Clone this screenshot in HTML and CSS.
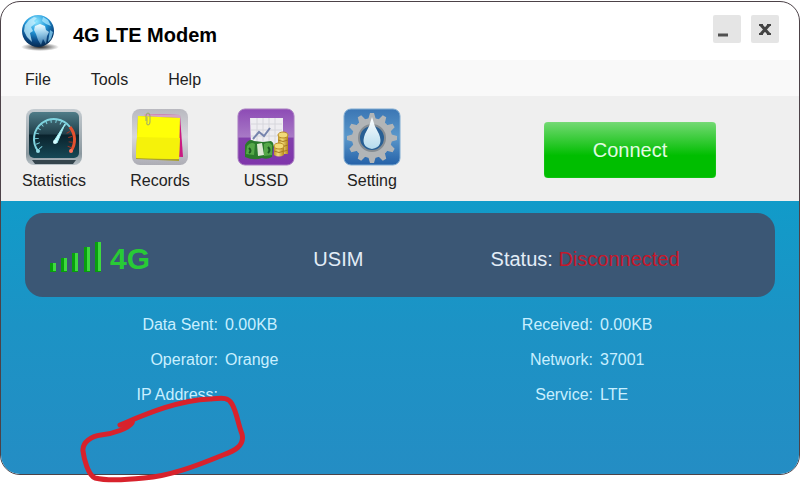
FILE: index.html
```html
<!DOCTYPE html>
<html lang="en">
<head>
  <meta charset="UTF-8" />
  <meta name="viewport" content="width=device-width, initial-scale=1.0"/>
  <title>4G LTE Modem</title>
  <link rel="stylesheet" href="styles.css">
</head>
<body>

  <div class="window">
    <header class="titlebar">
      <svg class="logo" viewBox="0 0 40 36" aria-hidden="true">
        <defs>
          <radialGradient id="globe" cx="45%" cy="20%" r="80%">
            <stop offset="0" stop-color="#8fe6ff"/>
            <stop offset="0.4" stop-color="#249bdc"/>
            <stop offset="0.75" stop-color="#0b4a86"/>
            <stop offset="1" stop-color="#062a50"/>
          </radialGradient>
          <radialGradient id="globe-shadow">
            <stop offset="0" stop-color="#222"/>
            <stop offset="1" stop-color="#222" stop-opacity="0"/>
          </radialGradient>
          <linearGradient id="land" x2="0" y2="1">
            <stop offset="0" stop-color="#f4fdff"/>
            <stop offset="1" stop-color="#8ccdf0" stop-opacity=".4"/>
          </linearGradient>
        </defs>
        <ellipse cx="19" cy="32" rx="19" ry="4" fill="url(#globe-shadow)"/>
        <circle cx="17" cy="16" r="16" fill="url(#globe)"/>
        <path d="M4 10 8 5l5-3 3 1-3 3 2 2-5 4 2 4-3 2 2 9-5-5-3-6z" fill="#c9f2ff" opacity=".75"/>
        <path d="M14 11l5-2 5 2 1 4 3 2-2 4-1 8-3-5-2 6-3-5-2-6-2-4z" fill="url(#land)"/>
        <path d="M22 2l5 3 3 6-5-2-4-3z" fill="#aee9ff" opacity=".75"/>
        <path d="M29 15l3 2-2 7-3 3z" fill="#8ed8fa" opacity=".75"/>
      </svg>
      <h1>4G LTE Modem</h1>
      <div class="window-buttons">
        <button type="button" aria-label="Minimize">
          <svg viewBox="0 0 28 28"><path d="M5 20h10" stroke="#505050" stroke-width="3"/></svg>
        </button>
        <button type="button" aria-label="Close">
          <svg viewBox="0 0 28 28">
            <path d="M10 10l8 9M18 10l-8 9" stroke="#444" stroke-width="3"/>
            <path d="M8 10h4M16 10h4M8 19h4M16 19h4" stroke="#444" stroke-width="2"/>
          </svg>
        </button>
      </div>
    </header>

    <nav class="menu">
      <a href="#file">File</a>
      <a href="#tools">Tools</a>
      <a href="#help">Help</a>
    </nav>

    <div class="toolbar">
      <!-- Statistics -->
      <button type="button" class="tool">
        <svg viewBox="0 0 58 58" aria-hidden="true">
          <defs>
            <linearGradient id="dial" x2="0" y2="1">
              <stop offset="0" stop-color="#4f7c88"/>
              <stop offset=".48" stop-color="#203f4a"/>
              <stop offset=".5" stop-color="#0a222c"/>
              <stop offset="1" stop-color="#174956"/>
            </linearGradient>
            <linearGradient id="frame" x2="0" y2="1">
              <stop offset="0" stop-color="#c5ccd1"/>
              <stop offset=".8" stop-color="#8b989f"/>
              <stop offset="1" stop-color="#b9c2c7"/>
            </linearGradient>
          </defs>
          <rect x="1" y="1" width="56" height="56" rx="8" fill="url(#frame)"/>
          <path d="M7 52h44l-3 4H10z" fill="#35454d"/>
          <rect x="4" y="4" width="50" height="46" rx="5" fill="url(#dial)"/>
          <path d="M13 43A20 20 0 1 1 45 19" fill="none" stroke="#7fd3df" stroke-width="2"/>
          <path d="M16 40A16 16 0 0 1 40 18" fill="none" stroke="#7fd3df" stroke-width="4" stroke-dasharray="1 4"/>
          <path d="M45 19A20 20 0 0 1 46 43" fill="none" stroke="#e4512f" stroke-width="3"/>
          <path d="M43 24A16 16 0 0 1 44 40" fill="none" stroke="#a63422" stroke-width="4" stroke-dasharray="1 4"/>
          <path d="M29 33 40 16 32 35z" fill="#c7fbff" stroke="#9decf2"/>
          <circle cx="30" cy="34" r="2" fill="#d5fcff"/>
          <circle cx="13" cy="43" r="2" fill="#91dbe5"/>
          <circle cx="46" cy="43" r="2" fill="#ff745c"/>
        </svg>
        <span>Statistics</span>
      </button>

      <!-- Records -->
      <button type="button" class="tool">
        <svg viewBox="0 0 58 58" aria-hidden="true">
          <defs>
            <linearGradient id="tray" x2="0" y2="1">
              <stop offset="0" stop-color="#b9b9c0"/>
              <stop offset=".5" stop-color="#d7d7dc"/>
              <stop offset="1" stop-color="#adadb5"/>
            </linearGradient>
          </defs>
          <rect x="1" y="1" width="56" height="56" rx="8" fill="url(#tray)"/>
          <path d="M13 6l36 1 3 42-32-1z" fill="#c91a82"/>
          <path d="M13 6l36 1v4H13z" fill="#d4a6c4"/>
          <path d="M7 8l41 2v43L5 51z" fill="#aaa22c"/>
          <path d="M7 8l42 2-1 41-43-1z" fill="#ffff08"/>
          <path d="M6 29l43 1-1 21-43-1z" fill="#f5f20a"/>
          <path d="M15 13V8q0-3 2-3t2 3v6q0 3-2 3t-1-3V9" fill="none" stroke="#9ba96c" stroke-width="1"/>
        </svg>
        <span>Records</span>
      </button>

      <!-- USSD -->
      <button type="button" class="tool">
        <svg viewBox="0 0 58 58" aria-hidden="true">
          <defs>
            <linearGradient id="purple" x2="0" y2="1">
              <stop offset="0" stop-color="#8d4bb5"/>
              <stop offset=".5" stop-color="#a879c6"/>
              <stop offset=".52" stop-color="#823fac"/>
              <stop offset="1" stop-color="#7f35ab"/>
            </linearGradient>
            <linearGradient id="gold">
              <stop offset="0" stop-color="#bd942b"/>
              <stop offset=".4" stop-color="#f4df7c"/>
              <stop offset="1" stop-color="#b5831d"/>
            </linearGradient>
          </defs>
          <rect x="1" y="1" width="56" height="56" rx="7" fill="url(#purple)" stroke="#a77ac0"/>
          <path d="M13 10h33v28H14z" fill="#eeedf1"/>
          <path d="M14 16h31M14 22h31M14 28h31M20 10v26M26 10v26M32 10v26M38 10v26" stroke="#d6d6dc" stroke-width="1"/>
          <path d="M16 31l6-7 5 4 6-8" fill="none" stroke="#7684ad" stroke-width="2"/>
          <path d="M8 37q4-7 9-4l9 1 8-1q4 2 2 8l-1 8q-5 3-10 1-8 3-17-1z" fill="#2a7a2c"/>
          <path d="M10 38q4-5 8-2l-1 11-8-1zM27 36q5-3 8 1v10l-8 1z" fill="#55a848"/>
          <path d="M12 40q3 3 0 5M31 39q3 3 0 6" fill="none" stroke="#1c5a20" stroke-width="2"/>
          <path d="M20 36l5-1 2 12-6 1z" fill="#dce8d2"/>
          <path d="M41 27v19h10V27z" fill="url(#gold)"/>
          <ellipse cx="46" cy="27" rx="5" ry="3" fill="#f2db79" stroke="#bb8b27"/>
          <path d="M41 32q5 3 10 0M41 37q5 3 10 0M41 42q5 3 10 0" fill="none" stroke="#aa7b20"/>
          <path d="M37 38v9q5 3 10 0v-9z" fill="url(#gold)"/>
          <ellipse cx="42" cy="38" rx="5" ry="3" fill="#f3dc77" stroke="#bb8b27"/>
          <path d="M37 43q5 3 10 0" fill="none" stroke="#aa7b20"/>
        </svg>
        <span>USSD</span>
      </button>

      <!-- Setting -->
      <button type="button" class="tool">
        <svg viewBox="0 0 58 58" aria-hidden="true">
          <defs>
            <linearGradient id="blue" x2="0" y2="1">
              <stop offset="0" stop-color="#3b76b4"/>
              <stop offset=".5" stop-color="#5b98cb"/>
              <stop offset="1" stop-color="#2461a8"/>
            </linearGradient>
            <linearGradient id="drop" x2="0" y2="1">
              <stop offset="0" stop-color="#fff"/>
              <stop offset="1" stop-color="#b5dbed"/>
            </linearGradient>
          </defs>
          <rect x="1" y="1" width="56" height="56" rx="7" fill="url(#blue)" stroke="#7eabd2"/>
          <g fill="#b2b5b7">
            <circle cx="29" cy="30" r="20"/>
            <g id="teeth">
              <path id="tooth" d="M27 5h4l2 7h-8zM25 48h8l-2 7h-4z"/>
              <use href="#tooth" transform="rotate(30 29 30)"/>
              <use href="#tooth" transform="rotate(60 29 30)"/>
            </g>
            <use href="#teeth" transform="rotate(90 29 30)"/>
          </g>
          <circle cx="29" cy="30" r="13" fill="#285f94" stroke="#858c92" stroke-width="2"/>
          <path d="M29 9q-2 9-7 17-5 13 7 15 12-2 7-15-5-8-7-17z" fill="url(#drop)"/>
        </svg>
        <span>Setting</span>
      </button>

      <button type="button" class="connect">Connect</button>
    </div>

    <main class="panel">
      <section class="status">
        <div class="signal">
          <svg viewBox="0 0 52 32" role="img" aria-label="Signal strength">
            <g fill="#08a00d">
              <path d="M0 22h6v9H0zM11 17h6v14h-6zM22 12h6v19h-6zM34 6h6v25h-6zM45 1h6v30h-6z"/>
            </g>
            <g fill="#3fda3f">
              <path d="M3 22h3v8H3zM14 17h3v13h-3zM25 12h3v18h-3zM37 6h3v24h-3zM48 1h3v29h-3z"/>
            </g>
          </svg>
          <strong>4G</strong>
        </div>
        <div>USIM</div>
        <div>Status: <span class="disconnected">Disconnected</span></div>
      </section>

      <section class="details">
        <dl>
          <dt>Data Sent:</dt><dd>0.00KB</dd>
          <dt>Operator:</dt><dd>Orange</dd>
          <dt>IP Address:</dt><dd></dd>
        </dl>
        <dl>
          <dt>Received:</dt><dd>0.00KB</dd>
          <dt>Network:</dt><dd>37001</dd>
          <dt>Service:</dt><dd>LTE</dd>
        </dl>
      </section>

      <!-- Hand drawn marker -->
      <svg class="marker" viewBox="0 0 170 90" aria-hidden="true">
        <path d="M41 31C65 21 99 6 131 5C144 4 149 3 153 10C158 19 159 30 163 40C166 52 155 57 144 61C117 72 91 82 65 84C46 86 28 87 16 84C9 81 5 65 4 57C3 48 13 42 22 41C34 40 50 34 53 29C54 27 53 26 52 27L41 31"/>
      </svg>
    </main>
  </div>

</body>
</html>
```
FILE: styles.css
```css
* {
  box-sizing: border-box;
}

body {
  margin: 0;
  padding: 1px 0 8px;
  background: #fff;
  font-family: "Liberation Sans", Arial, sans-serif;
  font-size: 16px;
  line-height: 20px;
  color: #222;
}

button {
  border: none;
  padding: 0;
  font: inherit;
  color: inherit;
  cursor: pointer;
}

svg {
  display: block;
}

.window {
  border: 1px solid #4c4248;
  border-radius: 20px;
  background: #fff;
}

.titlebar {
  display: flex;
  align-items: center;
  gap: 12px;
  height: 58px;
  padding: 4px 20px 0;
}

.logo {
  width: 40px;
  height: 36px;
}

h1 {
  margin: 0;
  padding-top: 4px;
  font-size: 20px;
  line-height: 24px;
  color: #000;
}

.window-buttons {
  display: flex;
  gap: 10px;
  margin-left: auto;
  padding-bottom: 8px;
}

.window-buttons button {
  width: 28px;
  height: 28px;
  border-radius: 2px;
  background: #e5e5e5;
}

.menu {
  display: flex;
  gap: 40px;
  padding: 10px 24px 6px;
  background: #f9f9f9;
}

.menu a {
  color: #222;
  text-decoration: none;
}

.toolbar {
  display: flex;
  align-items: center;
  padding: 12px 83px 10px 0;
  background: #efefef;
}

.tool {
  width: 106px;
  background: none;
}

.tool svg {
  width: 58px;
  height: 58px;
  margin: 0 auto 5px;
}

.connect {
  width: 172px;
  height: 56px;
  margin-left: auto;
  border-radius: 4px;
  background: linear-gradient(#74d974, #00be00 60%, #00be00);
  box-shadow: inset 0 0 1px #8be88b;
  font-size: 20px;
  color: #e2fbe2;
}

.panel {
  position: relative;
  padding: 12px 24px 69px;
  border-radius: 0 0 19px 19px;
  background: linear-gradient(#119bc9, #1c93c5 45%, #248dc4);
}

.status {
  display: grid;
  grid-template-columns: 263fr 177fr 284fr;
  align-items: center;
  height: 84px;
  padding: 8px 0 0 25px;
  border-radius: 18px;
  background: #3b5775;
  font-size: 20px;
  color: #e3edf7;
}

.signal {
  display: flex;
  align-items: center;
  gap: 8px;
}

.signal svg {
  width: 52px;
  height: 32px;
  margin-bottom: 4px;
}

.signal strong {
  font-size: 30px;
  line-height: 32px;
  color: #28cb35;
}

.disconnected {
  color: #c5182b;
}

.details {
  display: flex;
  margin: 0 -24px;
  padding-top: 18px;
  color: #c9efff;
}

dl {
  display: grid;
  grid-template-columns: 217px 1fr;
  gap: 15px 7px;
  flex: 375;
  margin: 0;
}

dl + dl {
  flex: 423;
}

dt {
  text-align: right;
}

dd {
  margin: 0;
}

/* drawn over the panel and past its lower edge */
.marker {
  position: absolute;
  left: 78px;
  bottom: -10px;
  width: 170px;
  height: 90px;
}

.marker path {
  fill: none;
  stroke: #d8222c;
  stroke-width: 5;
  stroke-linecap: round;
  stroke-linejoin: round;
}
```
